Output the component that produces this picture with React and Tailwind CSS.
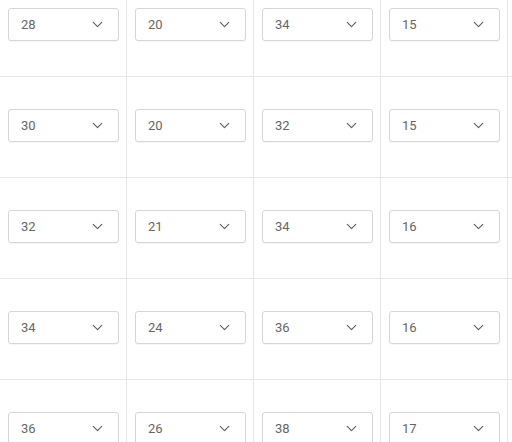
import React from "react";
import { ChevronDown } from "lucide-react";

const rows = [
  ["28", "20", "34", "15"],
  ["30", "20", "32", "15"],
  ["32", "21", "34", "16"],
  ["34", "24", "36", "16"],
  ["36", "26", "38", "17"],
];

const Select = ({ value }) => (
  <div className="w-[111px] h-[33px] flex items-center justify-between pl-[12px] pr-[12px] border border-[#d6d6d6] rounded-[3px] bg-white shadow-[0_1px_1px_rgba(0,0,0,0.04)]">
    <span className="text-[13px] text-[#666666]">{value}</span>
    <ChevronDown size={17} strokeWidth={1.7} className="text-[#5f6368]" />
  </div>
);

const App = () => {
  return (
    <div
      className="w-[512px] h-[442px] overflow-hidden bg-white"
      style={{ fontFamily: "Roboto, 'Noto Sans', sans-serif" }}
    >
      <div className="mt-[-24px]">
        {rows.map((row, i) => (
          <div key={i} className="flex">
            {row.map((v, j) => (
              <div
                key={j}
                className="w-[127px] h-[101px] shrink-0 flex items-start pt-[32px] pl-[8px] border-r border-b border-[#e6e6e6]"
              >
                <Select value={v} />
              </div>
            ))}
            <div className="w-[40px] h-[101px] shrink-0 border-b border-[#e6e6e6]" />
          </div>
        ))}
      </div>
    </div>
  );
};

export default App;
